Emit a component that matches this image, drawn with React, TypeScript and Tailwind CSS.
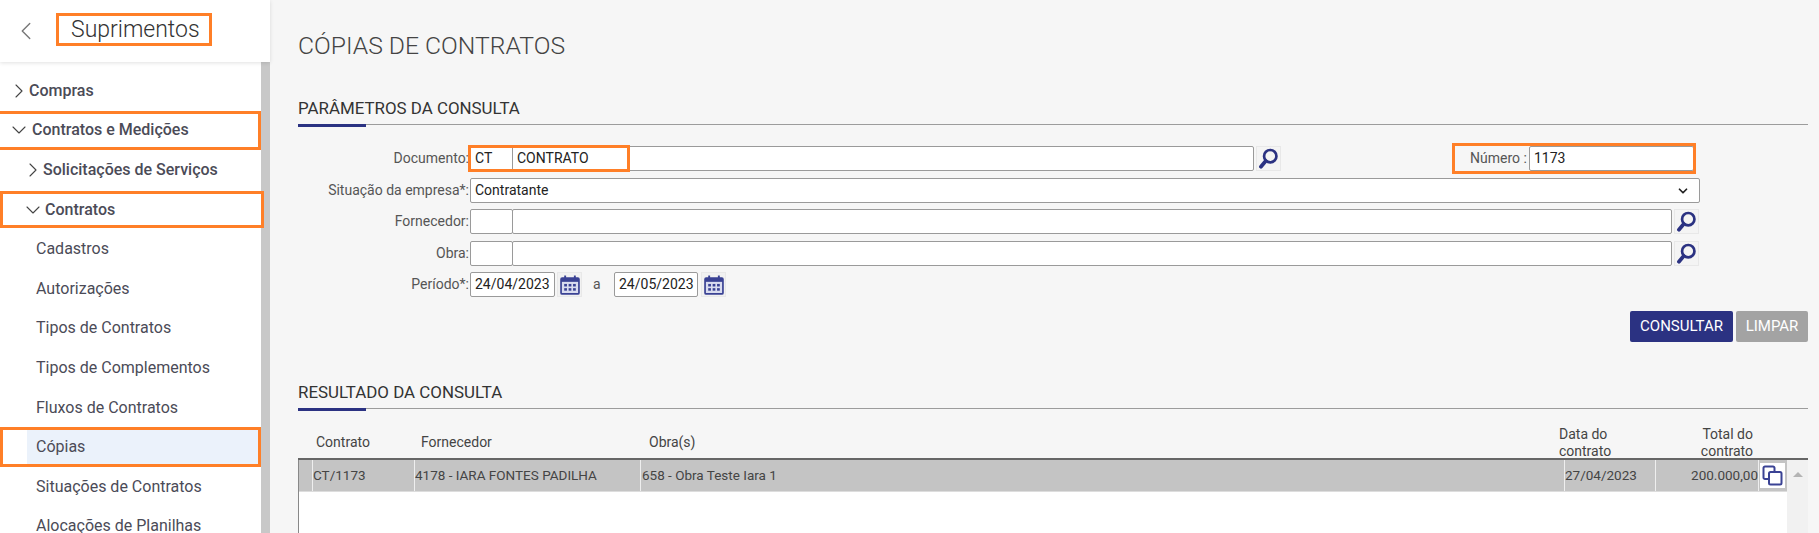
import { ChevronDown, ChevronLeft, ChevronRight } from "lucide-react";
import type { ReactNode } from "react";

const MENU_ITEMS = [
  "Cadastros",
  "Autorizações",
  "Tipos de Contratos",
  "Tipos de Complementos",
  "Fluxos de Contratos",
  "Cópias",
  "Situações de Contratos",
  "Alocações de Planilhas",
];

function SearchButton() {
  return (
    <button
      type="button"
      className="flex h-[25px] w-[25px] shrink-0 items-center justify-center border border-[#e8e8e8] bg-[#f4f4f4]"
    >
      <svg width="21" height="21" viewBox="0 0 18 18" fill="none">
        <circle cx="10.5" cy="7" r="5.3" stroke="#2b3282" strokeWidth="2.3" />
        <path d="M6.6 11.2 L2.5 16" stroke="#2b3282" strokeWidth="3.2" strokeLinecap="round" />
      </svg>
    </button>
  );
}

function CalendarButton() {
  return (
    <button
      type="button"
      className="flex h-[25px] w-[25px] shrink-0 items-center justify-center border border-[#e8e8e8] bg-[#f1f1f1]"
    >
      <svg width="20" height="20" viewBox="0 0 19 19">
        <rect x="1" y="3" width="17" height="15" rx="1" fill="#d9dcef" stroke="#3a4294" strokeWidth="1.6" />
        <rect x="1" y="3" width="17" height="3.5" fill="#3a4294" />
        <rect x="4" y="0.5" width="1.8" height="4" fill="#3a4294" />
        <rect x="13.2" y="0.5" width="1.8" height="4" fill="#3a4294" />
        <g fill="#3a4294">
          <rect x="4" y="8.5" width="2.6" height="2.4" />
          <rect x="8.2" y="8.5" width="2.6" height="2.4" />
          <rect x="12.4" y="8.5" width="2.6" height="2.4" />
          <rect x="4" y="12.5" width="2.6" height="2.4" />
          <rect x="8.2" y="12.5" width="2.6" height="2.4" />
          <rect x="12.4" y="12.5" width="2.6" height="2.4" />
        </g>
      </svg>
    </button>
  );
}

function Field({ className, children }: { className: string; children?: ReactNode }) {
  return (
    <div
      className={`flex h-full items-center rounded-[2px] border border-[#9a9a9a] bg-white px-[4px] text-[14px] text-[#222] ${className}`}
    >
      {children}
    </div>
  );
}

function Label({ children }: { children: ReactNode }) {
  return <span className="w-[172px] shrink-0 pr-[1px] text-right text-[14px] text-[#555]">{children}</span>;
}

function Heading({ children }: { children: ReactNode }) {
  return (
    <div className="relative border-b border-[#9c9c9c] pb-[6px] text-[16.9px] leading-[20px] text-[#333]">
      {children}
      <div className="absolute bottom-[-3px] left-0 h-[3px] w-[68px] bg-[#2b3282]" />
    </div>
  );
}

function Mark({ className }: { className: string }) {
  return <div className={`pointer-events-none absolute border-[3px] border-[#ff7f27] ${className}`} />;
}

function Sidebar() {
  return (
    <aside className="flex h-full w-[270px] shrink-0 flex-col bg-white font-['Roboto',sans-serif]">
      <div className="relative z-10 flex h-[62px] shrink-0 items-center bg-white shadow-[0_1px_4px_rgba(0,0,0,0.12)]">
        <ChevronLeft className="ml-[11px] text-[#777]" size={30} strokeWidth={1.1} />
        <span className="relative ml-[30px] -mt-[3px] text-[23px] leading-[29px] font-light text-[#333]">
          Suprimentos
          <Mark className="-inset-y-[2px] -left-[15px] -right-[12px]" />
        </span>
      </div>
      <div className="flex min-h-0 flex-1">
        <nav className="min-w-0 flex-1 pt-[9px] text-[#4b4b57]">
          <div className="flex h-[39.6px] items-center pl-[9px] text-[16px] font-medium">
            <ChevronRight size={24} strokeWidth={1.1} className="-mx-[2px] text-[#444]" />
            <span>Compras</span>
          </div>
          <div className="relative flex h-[39.6px] items-center pl-[7px] text-[16px] font-medium">
            <ChevronDown size={24} strokeWidth={1.1} className="mr-[1px] text-[#444]" />
            <span>Contratos e Medições</span>
            <Mark className="inset-y-0 -left-[3px] right-0" />
          </div>
          <div className="flex h-[39.6px] items-center pl-[21px] text-[16px] font-medium">
            <ChevronRight size={24} strokeWidth={1.1} className="-mr-[2px] text-[#444]" />
            <span>Solicitações de Serviços</span>
          </div>
          <div className="relative flex h-[39.6px] items-center pl-[21px] text-[16px] font-medium">
            <ChevronDown size={24} strokeWidth={1.1} className="text-[#444]" />
            <span>Contratos</span>
            <Mark className="inset-y-[1px] left-0 -right-[3px]" />
          </div>
          {MENU_ITEMS.map((item) =>
            item === "Cópias" ? (
              <div key={item} className="relative pl-[27px]">
                <div className="flex h-[39.6px] items-center bg-[#ebf2fb] pl-[9px] text-[16px]">{item}</div>
                <Mark className="inset-y-0 left-0 right-0" />
              </div>
            ) : (
              <div key={item} className="flex h-[39.6px] items-center pl-[36px] text-[16px]">
                {item}
              </div>
            ),
          )}
        </nav>
        <div className="w-[9px] shrink-0 bg-[#c8c8c8]" />
      </div>
    </aside>
  );
}

function ParamsForm() {
  return (
    <div className="mt-[21px]">
      <div className="flex h-[25px] items-center">
        <Label>Documento:</Label>
        <div className="relative flex h-full">
          <Field className="w-[43px]">CT</Field>
          <Field className="w-[742px] -ml-[1px]">CONTRATO</Field>
          <Mark className="-inset-y-[1px] -left-[2px] right-[624px]" />
        </div>
        <div className="ml-[2px]">
          <SearchButton />
        </div>
        <div className="relative ml-[189px] flex h-full items-center">
          <span className="w-[59px] shrink-0 whitespace-nowrap text-[14px] text-[#555]">Número :</span>
          <Field className="w-[165px]">1173</Field>
          <Mark className="-inset-y-[3px] -left-[18px] -right-[2px]" />
        </div>
      </div>
      <div className="mt-[7px] flex h-[25px] items-center">
        <Label>Situação da empresa*:</Label>
        <Field className="w-[1230px] justify-between pr-[9px]">
          <span>Contratante</span>
          <ChevronDown size={14} strokeWidth={3} className="text-[#222]" />
        </Field>
      </div>
      <div className="mt-[6px] flex h-[25px] items-center">
        <Label>Fornecedor:</Label>
        <Field className="w-[43px]" />
        <Field className="w-[1160px] -ml-[1px]" />
        <div className="ml-[2px]">
          <SearchButton />
        </div>
      </div>
      <div className="mt-[7px] flex h-[25px] items-center">
        <Label>Obra:</Label>
        <Field className="w-[43px]" />
        <Field className="w-[1160px] -ml-[1px]" />
        <div className="ml-[2px]">
          <SearchButton />
        </div>
      </div>
      <div className="mt-[6px] flex h-[25px] items-center">
        <Label>Período*:</Label>
        <Field className="w-[85px]">24/04/2023</Field>
        <div className="ml-[2px]">
          <CalendarButton />
        </div>
        <span className="ml-[11px] w-[21px] text-[14px] text-[#555]">a</span>
        <Field className="w-[84px]">24/05/2023</Field>
        <div className="ml-[3px]">
          <CalendarButton />
        </div>
      </div>
      <div className="mt-[14px] flex justify-end gap-[3px]">
        <button
          type="button"
          className="h-[31px] w-[103px] rounded-[2px] bg-[#2b3282] text-[15px] text-white"
        >
          CONSULTAR
        </button>
        <button
          type="button"
          className="h-[31px] w-[72px] rounded-[2px] bg-[#a3a3a3] text-[15px] text-white"
        >
          LIMPAR
        </button>
      </div>
    </div>
  );
}

function ResultTable() {
  return (
    <div className="mt-[3px] flex min-h-0 flex-1 flex-col">
      <div className="flex h-[48px] shrink-0 items-end border-b-[2px] border-[#666] text-[14px] leading-[17px] text-[#444]">
        <span className="mb-[7px] ml-[18px] w-[105px]">Contrato</span>
        <span className="mb-[7px] w-[228px]">Fornecedor</span>
        <span className="mb-[7px] w-[910px]">Obra(s)</span>
        <span className="-mb-[2px] w-[95px]">
          Data do
          <br />
          contrato
        </span>
        <span className="-mb-[2px] w-[99px] text-right">
          Total do
          <br />
          contrato
        </span>
      </div>
      <div className="flex min-h-0 flex-1">
        <div className="min-w-0 flex-1 border-l border-[#888] bg-white">
          <div className="flex h-[32px] items-center border-b border-[#ddd] bg-[#c4c4c4] text-[13.5px] text-[#444]">
            <div className="h-full w-[13px] shrink-0" />
            <div className="flex h-full w-[102px] shrink-0 items-center border-l border-[#eee]">CT/1173</div>
            <div className="flex h-full w-[226px] shrink-0 items-center border-l border-[#eee]">
              4178 - IARA FONTES PADILHA
            </div>
            <div className="flex h-full w-[924px] shrink-0 items-center border-l border-[#eee] pl-[1px]">
              658 - Obra Teste Iara 1
            </div>
            <div className="flex h-full w-[91px] shrink-0 items-center border-l border-[#eee]">27/04/2023</div>
            <div className="flex h-full w-[103px] shrink-0 items-center justify-end border-l border-[#eee]">
              200.000,00
            </div>
            <div className="flex h-full flex-1 items-center justify-center border-l border-[#eee] py-[3px] pr-[2px] pl-[1px]">
              <div className="flex h-full w-full items-center justify-center bg-white">
                <svg width="21" height="21" viewBox="0 0 21 21" fill="none" stroke="#3a4294" strokeWidth="2">
                  <path d="M6 14 H3 a1.5 1.5 0 0 1 -1.5 -1.5 V3 A1.5 1.5 0 0 1 3 1.5 H11 A1.5 1.5 0 0 1 12.5 3 V6" />
                  <rect x="7" y="7" width="12.5" height="12.5" rx="1.5" />
                </svg>
              </div>
            </div>
          </div>
        </div>
        <div className="flex w-[21px] shrink-0 justify-center bg-[#f1f1f1] pt-[12px]">
          <div className="h-0 w-0 border-x-[5px] border-b-[5px] border-x-transparent border-b-[#b4b4b4]" />
        </div>
      </div>
    </div>
  );
}

export default function App() {
  return (
    <div className="flex h-[533px] w-[1819px] overflow-hidden bg-[#f6f6f6] font-['Roboto',sans-serif]">
      <Sidebar />
      <main className="flex min-w-0 flex-1 flex-col pr-[11px] pl-[28px]">
        <h1 className="mt-[31px] text-[24.7px] leading-[30px] font-light text-[#444]">CÓPIAS DE CONTRATOS</h1>
        <div className="mt-[37px]">
          <Heading>PARÂMETROS DA CONSULTA</Heading>
        </div>
        <ParamsForm />
        <div className="mt-[40px]">
          <Heading>RESULTADO DA CONSULTA</Heading>
        </div>
        <ResultTable />
      </main>
    </div>
  );
}
